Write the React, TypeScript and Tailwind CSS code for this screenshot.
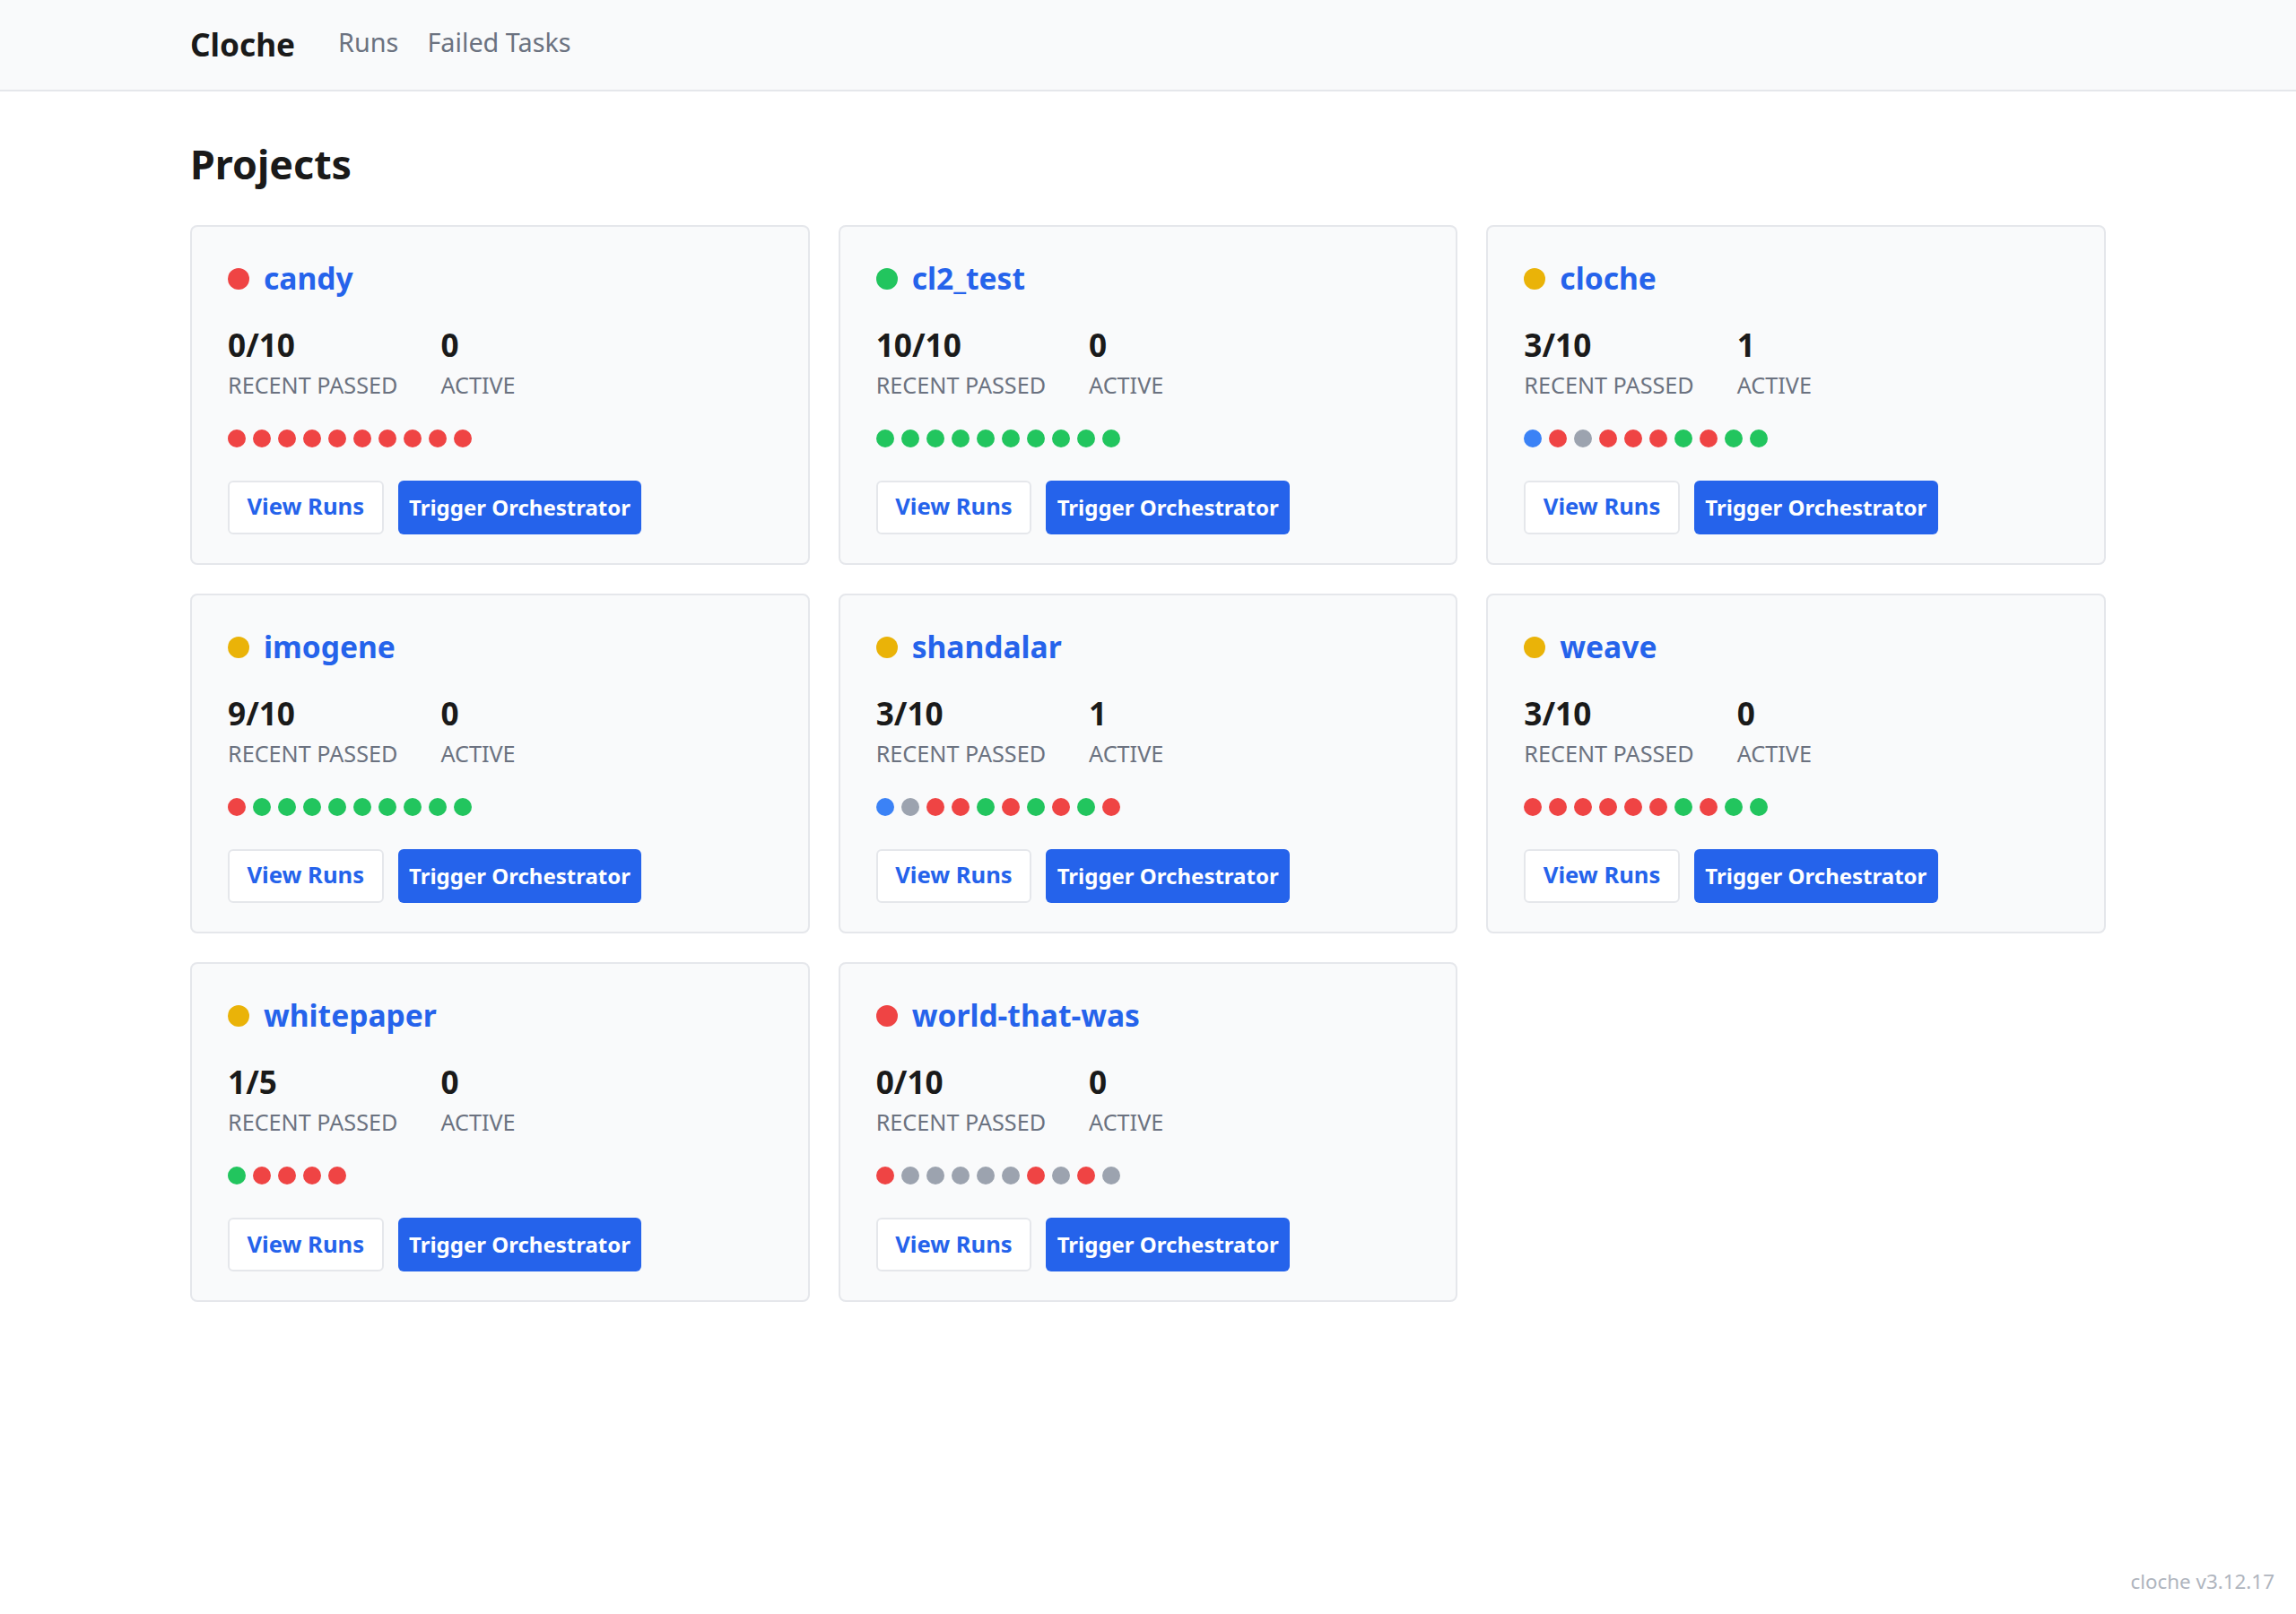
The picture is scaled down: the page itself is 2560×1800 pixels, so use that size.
const R = "bg-[#ef4444]";
const G = "bg-[#22c55e]";
const Y = "bg-[#eab308]";
const B = "bg-[#3b82f6]";
const N = "bg-[#9ca3af]";

const projects = [
    { name: "candy", status: R, passed: "0/10", active: "0", dots: [R, R, R, R, R, R, R, R, R, R] },
    { name: "cl2_test", status: G, passed: "10/10", active: "0", dots: [G, G, G, G, G, G, G, G, G, G] },
    { name: "cloche", status: Y, passed: "3/10", active: "1", dots: [B, R, N, R, R, R, G, R, G, G] },
    { name: "imogene", status: Y, passed: "9/10", active: "0", dots: [R, G, G, G, G, G, G, G, G, G] },
    { name: "shandalar", status: Y, passed: "3/10", active: "1", dots: [B, N, R, R, G, R, G, R, G, R] },
    { name: "weave", status: Y, passed: "3/10", active: "0", dots: [R, R, R, R, R, R, G, R, G, G] },
    { name: "whitepaper", status: Y, passed: "1/5", active: "0", dots: [G, R, R, R, R] },
    { name: "world-that-was", status: R, passed: "0/10", active: "0", dots: [R, N, N, N, N, N, R, N, R, N] },
];

type Project = (typeof projects)[number];

function ProjectCard({ project }: { project: Project }) {
    return (
        <div className="bg-[#f9fafb] border-2 border-[#e5e7eb] rounded-[8px] px-[40px] py-[32px]">
            <div className="flex items-center gap-[16px] mb-[24px]">
                <span className={`w-[24px] h-[24px] rounded-full ${project.status}`} />
                <a href="#" className="text-[33.6px] leading-[50px] font-bold text-[#2563eb] mb-[2px]">
                    {project.name}
                </a>
            </div>
            <div className="flex gap-[48px] mb-[30px]">
                <div>
                    <div className="text-[35.2px] leading-[46px] font-bold text-[#1a1a1a] mb-[2px]">{project.passed}</div>
                    <div className="text-[25.2px] leading-[40px] text-[#6b7280]">RECENT PASSED</div>
                </div>
                <div>
                    <div className="text-[35.2px] leading-[46px] font-bold text-[#1a1a1a] mb-[2px]">{project.active}</div>
                    <div className="text-[25.2px] leading-[40px] text-[#6b7280]">ACTIVE</div>
                </div>
            </div>
            <div className="flex gap-[8px] mb-[37.25px]">
                {project.dots.map((dot, i) => (
                    <span key={i} className={`w-[20px] h-[20px] rounded-full ${dot}`} />
                ))}
            </div>
            <div className="flex gap-[16px]">
                <button className="bg-white border-2 border-[#e5e7eb] rounded-[6px] h-[60px] w-[173.5px] pb-[1px] text-[25.6px] font-bold text-[#2563eb]">
                    View Runs
                </button>
                <button className="bg-[#2563eb] rounded-[6px] h-[60px] px-[12.5px] text-[24px] font-bold text-white">
                    Trigger Orchestrator
                </button>
            </div>
        </div>
    );
}

export default function App() {
    return (
        <div className="relative min-h-screen bg-white font-['Noto_Sans',sans-serif]">
            <nav className="bg-[#f9fafb] border-b-2 border-[#e5e7eb] h-[102px] px-[212px] flex items-center gap-[48px]">
                <span className="text-[35.2px] font-bold text-[#1a1a1a] -mt-[2px]">Cloche</span>
                <div className="flex gap-[32px] -mt-[6px]">
                    <a href="#" className="text-[28.8px] text-[#6b7280]">Runs</a>
                    <a href="#" className="text-[28.8px] text-[#6b7280]">Failed Tasks</a>
                </div>
            </nav>
            <main className="px-[212px] pt-[49px]">
                <h1 className="text-[44.8px] leading-[64px] font-bold text-[#1a1a1a] mb-[35.5px]">Projects</h1>
                <div className="grid grid-cols-3 gap-[32px]">
                    {projects.map((p) => (
                        <ProjectCard key={p.name} project={p} />
                    ))}
                </div>
            </main>
            <div className="absolute right-[24px] bottom-[19px] text-[22.4px] text-[#9ca3af] opacity-80">cloche v3.12.17</div>
        </div>
    );
}
